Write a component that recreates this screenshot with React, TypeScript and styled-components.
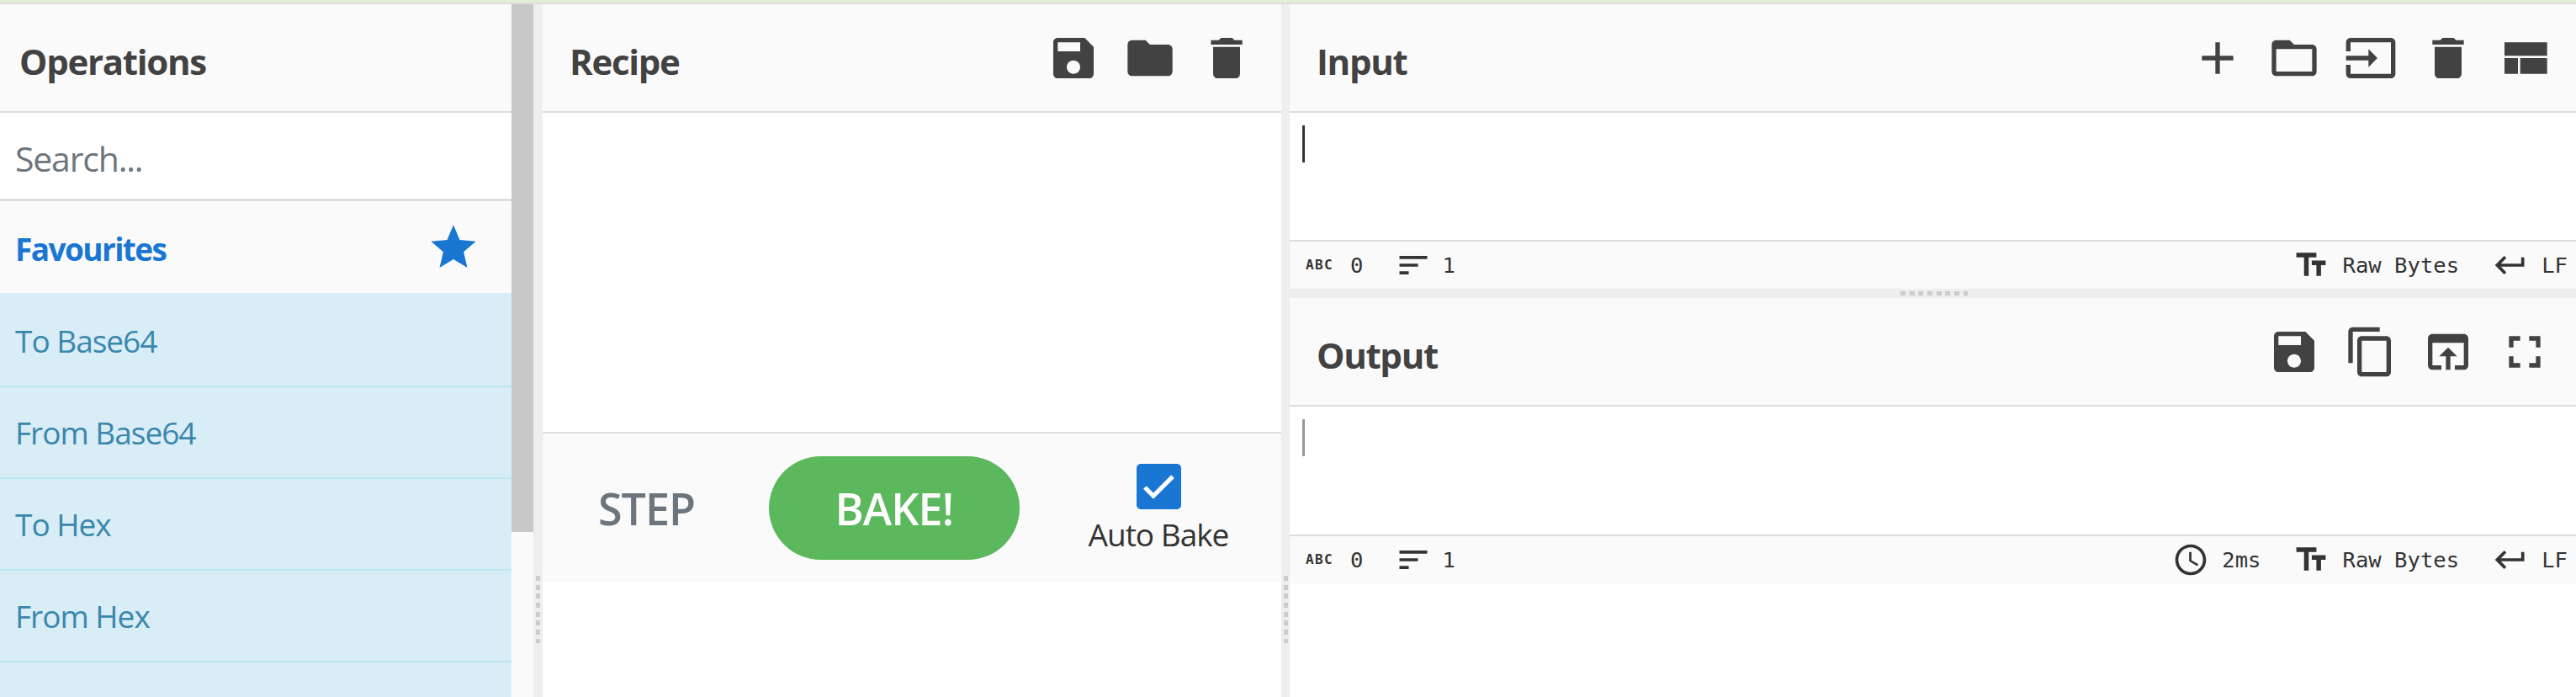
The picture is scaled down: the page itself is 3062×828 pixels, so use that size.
import React from "react";
import styled, { createGlobalStyle } from "styled-components";

const Global = createGlobalStyle`
  html, body { margin: 0; padding: 0; height: 828px; overflow: hidden; background: #fff; }
  * { box-sizing: border-box; }
  #root { height: 828px; }
`;

const SANS = `"Open Sans", "Noto Sans", sans-serif`;
const MONO = `"DejaVu Sans Mono", "Liberation Mono", monospace`;

const Page = styled.div`
  width: 3062px;
  height: 828px;
  display: flex;
  flex-direction: column;
  overflow: hidden;
  font-family: ${SANS};
`;
const Banner = styled.div`
  height: 5px;
  flex: none;
  background: #dff0d8;
  border-bottom: 2px solid #ddd;
`;
const Main = styled.div`
  flex: 1;
  min-height: 0;
  display: flex;
`;
const OperationsColumn = styled.section`
  width: 634px;
  flex: none;
  display: flex;
`;
const OperationsBody = styled.div`
  flex: 1;
  min-width: 0;
  overflow: hidden;
`;
const ScrollTrack = styled.div`
  width: 26px;
  flex: none;
  background: #fafafa;
`;
const ScrollThumb = styled.div`
  height: 627px;
  background: #c8c8c8;
`;
const VGutter = styled.div<{ $w: number }>`
  width: ${(p) => p.$w}px;
  flex: none;
  background: #eee;
  display: flex;
  justify-content: center;
  padding-top: 679px;
`;
const VDots = styled.div`
  width: 5px;
  height: 80px;
  background: repeating-linear-gradient(to bottom, #ccc 0 6px, transparent 6px 10.67px);
`;
const RecipeColumn = styled.section`
  width: 878px;
  flex: none;
  display: flex;
  flex-direction: column;
`;
const IOColumn = styled.section`
  flex: 1;
  min-width: 0;
  display: flex;
  flex-direction: column;
`;
const PanelHeader = styled.header<{ $left: number; $right: number }>`
  height: 129px;
  flex: none;
  background: #fafafa;
  border-bottom: 2px solid #ddd;
  display: flex;
  align-items: center;
  justify-content: space-between;
  padding: 0 ${(p) => p.$right}px 0 ${(p) => p.$left}px;
`;
const Title = styled.h2`
  margin: 8px 0 0;
  font-size: 42px;
  font-weight: 700;
  letter-spacing: -1.3px;
  line-height: 1;
  color: #424242;
`;
const Tools = styled.div`
  display: flex;
`;
const ToolButton = styled.button`
  width: 91.25px;
  height: 64px;
  padding: 0;
  border: 0;
  background: transparent;
  display: flex;
  align-items: center;
  justify-content: center;
  color: #424242;
`;
const Svg = styled.svg<{ $size: number }>`
  width: ${(p) => p.$size}px;
  height: ${(p) => p.$size}px;
  flex: none;
  display: block;
  fill: currentColor;
`;
const SearchBox = styled.div`
  height: 105px;
  background: #fff;
  border-bottom: 3px solid #ddd;
  display: flex;
  align-items: center;
  padding: 6px 0 0 18px;
  font-size: 41px;
  letter-spacing: -1.2px;
  color: #6c757d;
`;
const FavouritesRow = styled.div`
  height: 112px;
  background: #fafafa;
  border-bottom: 3px solid #d9edf7;
  display: flex;
  align-items: center;
  justify-content: space-between;
  padding: 0 37.5px 0 18px;
  font-size: 37px;
  font-weight: 700;
  letter-spacing: -1.6px;
  color: #1976d2;
`;
const FavouritesLabel = styled.span`
  margin-top: 3px;
`;
const StarButton = styled.span`
  display: flex;
  color: #1976d2;
`;
const OperationItem = styled.div`
  height: 109px;
  background: #d9edf7;
  border-bottom: 2px solid #bce8f1;
  display: flex;
  align-items: center;
  padding-left: 18px;
  font-size: 37px;
  letter-spacing: -1px;
  color: #3a87ad;
`;
const RecipeList = styled.div`
  height: 379px;
  flex: none;
  background: #fff;
`;
const BakeBar = styled.div`
  height: 179px;
  flex: none;
  background: #fafafa;
  border-top: 2px solid #ddd;
  display: grid;
  grid-template-columns: 268.5px 298.5px 1fr;
  align-items: center;
`;
const StepButton = styled.div`
  padding-left: 66px;
  font-size: 52px;
  font-weight: 600;
  letter-spacing: -1px;
  color: #6c757d;
`;
const BakeButton = styled.div`
  height: 123px;
  border-radius: 62px;
  background: #5cb85c;
  color: #fff;
  display: flex;
  align-items: center;
  justify-content: center;
  font-size: 52px;
  font-weight: 600;
  letter-spacing: -0.9px;
`;
const AutoBake = styled.label`
  display: flex;
  flex-direction: column;
  align-items: center;
  gap: 8px;
  padding-left: 19px;
  font-size: 37px;
  letter-spacing: -1px;
  line-height: 44px;
  color: #333;
`;
const CheckBox = styled.span`
  width: 53px;
  height: 54px;
  border-radius: 5px;
  background: #1976d2;
  display: flex;
  align-items: center;
  justify-content: center;
  color: #fff;
  svg {
    stroke: currentColor;
    stroke-width: 0.6;
  }
`;
const Surface = styled.div<{ $h: number }>`
  height: ${(p) => p.$h}px;
  flex: none;
  background: #fff;
  padding: 15px 0 0 15px;
`;
const Caret = styled.div<{ $color: string }>`
  width: 3px;
  height: 44px;
  background: ${(p) => p.$color};
`;
const StatusBar = styled.div`
  height: 58px;
  flex: none;
  background: #fafafa;
  border-top: 2px solid #ddd;
  display: flex;
  align-items: center;
  justify-content: space-between;
  padding: 0 10px 0 19px;
  font-family: ${MONO};
  font-size: 25.6px;
  color: #333;
`;
const StatusGroup = styled.div`
  display: flex;
  align-items: center;
`;
const Stat = styled.span<{ $before?: number; $after?: number }>`
  margin-left: ${(p) => p.$before ?? 15}px;
  margin-right: ${(p) => p.$after ?? 0}px;
  white-space: pre;
`;
const AbcMark = styled.span`
  width: 33px;
  font-size: 16px;
  font-weight: 700;
  letter-spacing: 1.4px;
  line-height: 1;
  margin-right: 6px;
`;
const HGutter = styled.div`
  height: 11px;
  flex: none;
  background: #eee;
  display: flex;
  justify-content: center;
  align-items: center;
  padding-left: 3px;
`;
const HDots = styled.div`
  width: 80px;
  height: 5px;
  background: repeating-linear-gradient(to right, #ccc 0 6px, transparent 6px 10.67px);
`;

const P = {
  save: "M17 3H5c-1.11 0-2 .9-2 2v14c0 1.1.89 2 2 2h14c1.1 0 2-.9 2-2V7l-4-4zm-5 16c-1.66 0-3-1.34-3-3s1.34-3 3-3 3 1.34 3 3-1.34 3-3 3zm3-10H5V5h10v4z",
  folder: "M10 4H4c-1.1 0-1.99.9-1.99 2L2 18c0 1.1.9 2 2 2h16c1.1 0 2-.9 2-2V8c0-1.1-.9-2-2-2h-8l-2-2z",
  folderOpen: "M20 6h-8l-2-2H4c-1.1 0-1.99.9-1.99 2L2 18c0 1.1.9 2 2 2h16c1.1 0 2-.9 2-2V8c0-1.1-.9-2-2-2zm0 12H4V8h16v10z",
  trash: "M6 19c0 1.1.9 2 2 2h8c1.1 0 2-.9 2-2V7H6v12zM19 4h-3.5l-1-1h-5l-1 1H5v2h14V4z",
  plus: "M19 13h-6v6h-2v-6H5v-2h6V5h2v6h6v2z",
  input: "M21 3.01H3c-1.1 0-2 .9-2 2V9h2V4.99h18v14.03H3V15H1v4.01c0 1.1.9 1.98 2 1.98h18c1.1 0 2-.88 2-1.98v-14c0-1.11-.9-2-2-2zM11 16l4-4-4-4v3H1v2h10v3z",
  compact: "M3 19h6v-7H3v7zm7 0h12v-7H10v7zM3 5v6h19V5H3z",
  copy: "M16 1H4c-1.1 0-2 .9-2 2v14h2V3h12V1zm3 4H8c-1.1 0-2 .9-2 2v14c0 1.1.9 2 2 2h11c1.1 0 2-.9 2-2V7c0-1.1-.9-2-2-2zm0 16H8V7h11v14z",
  browser: "M19 4H5c-1.11 0-2 .9-2 2v12c0 1.1.89 2 2 2h4v-2H5V8h14v10h-4v2h4c1.1 0 2-.9 2-2V6c0-1.1-.9-2-2-2zm-7 6l-4 4h3v6h2v-6h3l-4-4z",
  fullscreen: "M7 14H5v5h5v-2H7v-3zm-2-4h2V7h3V5H5v5zm12 7h-3v2h5v-5h-2v3zM14 5v2h3v3h2V5h-5z",
  star: "M12 17.27L18.18 21l-1.64-7.03L22 9.24l-7.19-.61L12 2 9.19 8.63 2 9.24l5.46 4.73L5.82 21z",
  sort: "M3 18h6v-2H3v2zM3 6v2h18V6H3zm0 7h12v-2H3v2z",
  text: "M2.5 4v3h5v12h3V7h5V4h-13zm19 5h-9v3h3v7h3v-7h3V9z",
  ret: "M19 7v4H5.83l3.58-3.59L8 6l-6 6 6 6 1.41-1.41L5.83 13H21V7z",
  clock: "M11.99 2C6.47 2 2 6.48 2 12s4.47 10 9.99 10C17.52 22 22 17.52 22 12S17.52 2 11.99 2zM12 20c-4.42 0-8-3.58-8-8s3.58-8 8-8 8 3.58 8 8-3.58 8-8 8zm.5-13H11v6l5.25 3.15.75-1.23-4.5-2.67z",
  check: "M9 16.17L4.83 12l-1.42 1.41L9 19 21 7l-1.41-1.41z",
};

const Icon = ({ d, size = 64 }: { d: string; size?: number }) => (
  <Svg $size={size} viewBox="0 0 24 24" aria-hidden="true">
    <path d={d} />
  </Svg>
);

const Toolbar = ({ icons }: { icons: string[] }) => (
  <Tools>
    {icons.map((d) => (
      <ToolButton key={d} type="button">
        <Icon d={d} />
      </ToolButton>
    ))}
  </Tools>
);

const Status = ({ time }: { time?: string }) => (
  <StatusBar>
    <StatusGroup>
      <AbcMark>ABC</AbcMark>
      <Stat $before={14} $after={38}>0</Stat>
      <Icon d={P.sort} size={44} />
      <Stat $before={12}>1</Stat>
    </StatusGroup>
    <StatusGroup>
      {time && (
        <>
          <Icon d={P.clock} size={44} />
          <Stat $after={38}>{time}</Stat>
        </>
      )}
      <Icon d={P.text} size={44} />
      <Stat $after={39}>Raw Bytes</Stat>
      <Icon d={P.ret} size={44} />
      <Stat>LF</Stat>
    </StatusGroup>
  </StatusBar>
);

const operations = ["To Base64", "From Base64", "To Hex", "From Hex", "To Hexdump"];

export default function App() {
  return (
    <Page>
      <Global />
      <Banner />
      <Main>
        <OperationsColumn>
          <OperationsBody>
            <PanelHeader $left={23} $right={0}>
              <Title>Operations</Title>
            </PanelHeader>
            <SearchBox>Search...</SearchBox>
            <FavouritesRow>
              <FavouritesLabel>Favourites</FavouritesLabel>
              <StarButton>
                <Icon d={P.star} />
              </StarButton>
            </FavouritesRow>
            {operations.map((name) => (
              <OperationItem key={name}>{name}</OperationItem>
            ))}
          </OperationsBody>
          <ScrollTrack>
            <ScrollThumb />
          </ScrollTrack>
        </OperationsColumn>
        <VGutter $w={11}>
          <VDots />
        </VGutter>
        <RecipeColumn>
          <PanelHeader $left={32} $right={19}>
            <Title>Recipe</Title>
            <Toolbar icons={[P.save, P.folder, P.trash]} />
          </PanelHeader>
          <RecipeList />
          <BakeBar>
            <StepButton>STEP</StepButton>
            <BakeButton>BAKE!</BakeButton>
            <AutoBake>
              <CheckBox>
                <Icon d={P.check} size={48} />
              </CheckBox>
              Auto Bake
            </AutoBake>
          </BakeBar>
        </RecipeColumn>
        <VGutter $w={10}>
          <VDots />
        </VGutter>
        <IOColumn>
          <PanelHeader $left={32} $right={15.5}>
            <Title>Input</Title>
            <Toolbar icons={[P.plus, P.folderOpen, P.input, P.trash, P.compact]} />
          </PanelHeader>
          <Surface $h={151}>
            <Caret $color="#333" />
          </Surface>
          <Status />
          <HGutter>
            <HDots />
          </HGutter>
          <PanelHeader $left={32} $right={15.5}>
            <Title>Output</Title>
            <Toolbar icons={[P.save, P.copy, P.browser, P.fullscreen]} />
          </PanelHeader>
          <Surface $h={152}>
            <Caret $color="#999" />
          </Surface>
          <Status time="2ms" />
        </IOColumn>
      </Main>
    </Page>
  );
}
